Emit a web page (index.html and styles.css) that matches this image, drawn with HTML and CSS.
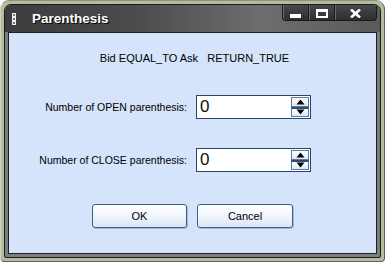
FILE: index.html
```html
<!DOCTYPE html>
<html>
<head>
<meta charset="utf-8">
<link rel="stylesheet" href="styles.css">
</head>
<body>
<div class="window">
  <div class="frame">
    <div class="titlebar">
      <svg class="grip" width="5" height="12" viewBox="0 0 5 12">
        <rect x="0.5" y="0.5" width="3" height="3" fill="#777" stroke="#f0f0f0"/>
        <rect x="0.5" y="4.5" width="3" height="3" fill="#777" stroke="#f0f0f0"/>
        <rect x="0.5" y="8.5" width="3" height="3" fill="#777" stroke="#f0f0f0"/>
      </svg>
      <div class="title">Parenthesis</div>
      <div class="caps">
        <div class="cap cap-min">
          <svg width="11" height="4" viewBox="0 0 11 4"><rect x="0" y="0" width="11" height="4" fill="#fff"/></svg>
        </div>
        <div class="cap cap-max">
          <svg width="12" height="9" viewBox="0 0 12 9"><rect x="1" y="1.5" width="10" height="6.5" fill="none" stroke="#fff" stroke-width="2"/><rect x="0" y="0" width="12" height="3" fill="#fff"/></svg>
        </div>
        <div class="cap cap-close">
          <svg width="11" height="9" viewBox="0 0 11 9"><path d="M1 0.5 L10 8.5 M10 0.5 L1 8.5" stroke="#fff" stroke-width="2.6"/></svg>
        </div>
      </div>
    </div>
    <div class="content">
      <div class="caption">Bid EQUAL_TO Ask&nbsp;&nbsp;&nbsp;RETURN_TRUE</div>
      <div class="form">
        <label class="label">Number of OPEN parenthesis:</label>
        <div class="spin">
          <div class="spin-value">0</div>
          <div class="spin-btns">
            <div class="spin-btn"><svg width="9" height="6" viewBox="0 0 9 6"><path d="M4.5 0.5 L8.5 5.5 L0.5 5.5 Z" fill="#000"/></svg></div>
            <div class="spin-btn"><svg width="9" height="6" viewBox="0 0 9 6"><path d="M0.5 0.5 L8.5 0.5 L4.5 5.5 Z" fill="#000"/></svg></div>
          </div>
        </div>
        <label class="label">Number of CLOSE parenthesis:</label>
        <div class="spin">
          <div class="spin-value">0</div>
          <div class="spin-btns">
            <div class="spin-btn"><svg width="9" height="6" viewBox="0 0 9 6"><path d="M4.5 0.5 L8.5 5.5 L0.5 5.5 Z" fill="#000"/></svg></div>
            <div class="spin-btn"><svg width="9" height="6" viewBox="0 0 9 6"><path d="M0.5 0.5 L8.5 0.5 L4.5 5.5 Z" fill="#000"/></svg></div>
          </div>
        </div>
      </div>
      <div class="actions">
        <button class="btn">OK</button>
        <button class="btn">Cancel</button>
      </div>
    </div>
  </div>
</div>
</body>
</html>
```
FILE: styles.css
```css
html, body {
  margin: 0;
  padding: 0;
  background: #ffffff;
}
.window {
  box-sizing: border-box;
  width: 385px;
  height: 262px;
  background: #b2bc9e;
  border: 1px solid #5e6653;
  border-top-color: #8c947c;
  border-left-color: #cfd5c2;
  border-radius: 9px 9px 4px 4px;
  padding: 3px;
  display: flex;
}
.frame {
  flex: 1;
  display: flex;
  flex-direction: column;
  background: #7d7d7d;
  border: 1px solid #1c1c1c;
  border-radius: 7px 7px 2px 2px;
  padding: 0 3px 3px 3px;
  overflow: hidden;
}
.titlebar {
  height: 27px;
  margin: 0 -3px;
  padding: 0 3px 0 7px;
  display: flex;
  align-items: flex-start;
  background: linear-gradient(to right, #3c3c3c 0%, #4c4c4c 35%, #6e6e6e 68%, #5a5a5a 100%);
}
.grip {
  margin-top: 8px;
  display: block;
}
.title {
  margin-left: 15px;
  margin-top: 6px;
  font-family: "Liberation Sans", Arial, sans-serif;
  font-weight: bold;
  font-size: 13.5px;
  color: #ffffff;
  text-shadow: 1px 1px 1px #000;
}
.caps {
  margin-left: auto;
  margin-right: 0;
  display: flex;
  height: 17px;
  margin-top: -1px;
}
.cap {
  display: flex;
  align-items: center;
  justify-content: center;
  height: 100%;
  box-sizing: border-box;
  background: linear-gradient(#4a4a4a, #2e2e2e);
  border: 1px solid #1a1a1a;
  border-top: none;
  box-shadow: inset 1px 0 0 #6a6a6a;
  padding-top: 2px;
}
.cap-min {
  width: 27px;
  border-bottom-left-radius: 4px;
}
.cap-min svg { margin-top: 6px; }
.cap-max {
  width: 26px;
  border-left: none;
}
.cap-close {
  width: 42px;
  border-left: none;
  border-bottom-right-radius: 4px;
}
.content {
  flex: 1;
  background: #d5e3fb;
  border: 1px solid #1e1e1e;
  display: flex;
  flex-direction: column;
  font-family: "Liberation Sans", Arial, sans-serif;
  font-size: 11px;
  color: #000;
}
.caption {
  padding-top: 19px;
  line-height: 13px;
  text-align: center;
  padding-left: 4px;
  white-space: nowrap;
}
.form {
  margin-top: 30px;
  display: grid;
  grid-template-columns: 178px 115px;
  column-gap: 9px;
  row-gap: 29px;
  align-items: center;
}
.label {
  text-align: right;
  font-size: 10.5px;
  white-space: nowrap;
}
.spin {
  box-sizing: border-box;
  height: 24px;
  display: flex;
  background: #fff;
  border: 1px solid #28456a;
}
.spin-value {
  flex: 1;
  font-size: 17px;
  line-height: 22px;
  padding-left: 3px;
  color: #111;
}
.spin-btns {
  width: 18px;
  margin: 1px 1px 1px 0;
  display: flex;
  flex-direction: column;
  gap: 0;
}
.spin-btn {
  flex: 1;
  display: flex;
  align-items: center;
  justify-content: center;
  border: 1px solid #5b7ba3;
  background: linear-gradient(#ffffff, #dde7f5);
}
.spin-btn + .spin-btn {
  border-top: 2px solid #2a4a72;
}
.actions {
  margin-top: 32px;
  padding-left: 83px;
  display: flex;
  gap: 10px;
}
.btn {
  box-sizing: border-box;
  width: 95px;
  height: 24px;
  font-family: "Liberation Sans", Arial, sans-serif;
  font-size: 11px;
  color: #000;
  background: linear-gradient(#ffffff 0%, #f2f6fd 45%, #dce6f6 100%);
  border: 1px solid #3f5f8a;
  border-radius: 3px;
  box-shadow: 1px 1px 0 #a9b9d2;
  padding: 0;
}
.btn + .btn { width: 96px; }
```
